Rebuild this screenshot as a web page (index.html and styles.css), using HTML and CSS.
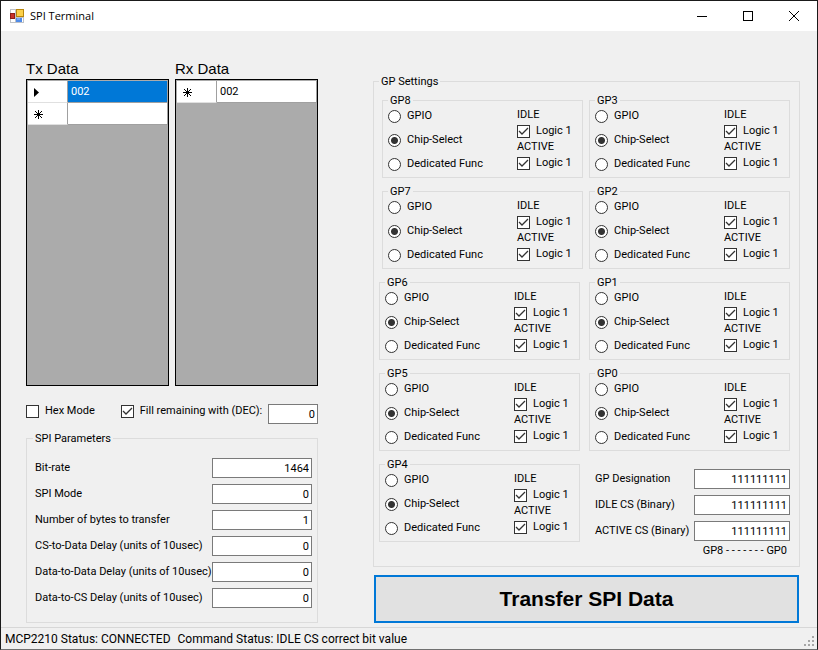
FILE: index.html
```html
<!DOCTYPE html>
<html lang="en">
<head>
<meta charset="utf-8">
<meta name="viewport" content="width=device-width, initial-scale=1">
<title>SPI Terminal</title>
<link rel="stylesheet" href="styles.css">
</head>
<body>
<div class="window">
  <header class="titlebar">
    <svg class="app-icon" width="14" height="14" viewBox="0 0 14 14" aria-hidden="true">
      <rect width="14" height="14" fill="#bfc2c7"/>
      <path d="M1 1h4v3H1zM1 10h4v3H1zM12 9h1v4h-1z" fill="#fff"/>
      <rect x="0.500" y="4.500" width="4" height="5" fill="#c8322a" stroke="#8e1f17"/>
      <rect x="6.500" y="0.500" width="7" height="7" fill="#fbd04a" stroke="#b8860b"/>
      <rect x="6" y="9" width="6" height="4" fill="#4f8be8"/>
      <path d="M7 10h3" stroke="#a9c8fa"/>
    </svg>
    <h1 class="title">SPI Terminal</h1>
    <div class="caption-buttons">
      <button class="caption-button" aria-label="Minimize"><svg width="12" height="12"><path d="M1 6.500h10" stroke="#000"/></svg></button>
      <button class="caption-button" aria-label="Maximize"><svg width="12" height="12"><rect x="1.500" y="1.500" width="9" height="9" fill="none" stroke="#000"/></svg></button>
      <button class="caption-button" aria-label="Close"><svg width="12" height="12"><path d="M1 1l10 10M11 1L1 11" stroke="#000"/></svg></button>
    </div>
  </header>

  <main class="content">
    <section class="left">
      <div class="grids">
        <section class="data-panel">
          <h2 class="panel-title">Tx Data</h2>
          <div class="data-view">
            <table class="data-table" aria-label="Tx Data">
              <tr><th scope="row" aria-label="Current row"><svg width="12" height="12"><path d="M2 2v9l5-4.500z"/></svg></th><td class="selected">002</td></tr>
              <tr><th scope="row" aria-label="New row"><svg width="12" height="12"><path d="M6.500 2v9M2 6.500h9M3 3l7 7M10 3l-7 7" stroke="#000"/></svg></th><td></td></tr>
            </table>
          </div>
        </section>
        <section class="data-panel">
          <h2 class="panel-title">Rx Data</h2>
          <div class="data-view">
            <table class="data-table" aria-label="Rx Data">
              <tr><th scope="row" aria-label="New row"><svg width="12" height="12"><path d="M6.500 2v9M2 6.500h9M3 3l7 7M10 3l-7 7" stroke="#000"/></svg></th><td>002</td></tr>
            </table>
          </div>
        </section>
      </div>

      <div class="options">
        <label class="choice"><input type="checkbox">Hex Mode</label>
        <label class="choice"><input type="checkbox" checked>Fill remaining with (DEC):</label>
        <input class="field fill-value" type="text" value="0" aria-label="Fill value">
      </div>

      <fieldset class="group spi">
        <legend>SPI Parameters</legend>
        <div class="form-rows">
          <label for="bitrate">Bit-rate</label><input class="field" id="bitrate" type="text" value="1464">
          <label for="mode">SPI Mode</label><input class="field" id="mode" type="text" value="0">
          <label for="bytes">Number of bytes to transfer</label><input class="field" id="bytes" type="text" value="1">
          <label for="csdata">CS-to-Data Delay (units of 10usec)</label><input class="field" id="csdata" type="text" value="0">
          <label for="datadata">Data-to-Data Delay (units of 10usec)</label><input class="field" id="datadata" type="text" value="0">
          <label for="datacs">Data-to-CS Delay (units of 10usec)</label><input class="field" id="datacs" type="text" value="0">
        </div>
      </fieldset>
    </section>

    <section class="right">
      <fieldset class="group settings">
        <legend>GP Settings</legend>
        <div class="pin-columns">
          <div class="pin-column">
            <div class="pin-stack upper" data-pins="8 7"></div>
            <div class="pin-stack lower" data-pins="6 5 4"></div>
          </div>
          <div class="pin-column">
            <div class="pin-stack" data-pins="3 2 1 0"></div>
            <div class="form-rows summary">
              <label for="designation">GP Designation</label><input class="field" id="designation" type="text" value="111111111">
              <label for="idlecs">IDLE CS (Binary)</label><input class="field" id="idlecs" type="text" value="111111111">
              <label for="activecs">ACTIVE CS (Binary)</label><input class="field" id="activecs" type="text" value="111111111">
            </div>
            <p class="bit-order">GP8 - - - - - - - GP0</p>
          </div>
        </div>
      </fieldset>
      <button class="transfer">Transfer SPI Data</button>
    </section>
  </main>

  <footer class="statusbar">
    <span>MCP2210 Status: CONNECTED</span>
    <span>Command Status: IDLE CS correct bit value</span>
    <svg class="grip" width="10" height="10" aria-hidden="true"><path d="M8 0h2v2h-2zM4 4h2v2h-2zM8 4h2v2h-2zM0 8h2v2h-2zM4 8h2v2h-2zM8 8h2v2h-2z" fill="#a6a6a6"/></svg>
  </footer>
</div>
<script src="pins.js"></script>
</body>
</html>
```
FILE: styles.css
```css
* { box-sizing: border-box; }

body {
  margin: 0;
  font: 11px/14px Roboto, "Liberation Sans", Arial, sans-serif;
  color: #000;
}

button, input { font: inherit; color: inherit; margin: 0; }

.window {
  min-height: 100vh;
  display: flex;
  flex-direction: column;
  background: #f0f0f0;
  border: 1px solid #1a1a1a;
  border-bottom-color: #707070;
}

.titlebar {
  display: flex;
  align-items: center;
  height: 30px;
  padding-left: 9px;
  background: #fff;
}

.title {
  flex: 1;
  margin: 0 0 0 6px;
  font: 11px/16px "Open Sans", "Noto Sans", sans-serif;
}

.caption-buttons { display: flex; align-self: stretch; }

.caption-button {
  display: flex;
  align-items: center;
  justify-content: center;
  width: 46px;
  padding: 0;
  border: 0;
  background: none;
}

.content {
  flex: 1;
  display: grid;
  grid-template-columns: minmax(0, 292fr) minmax(0, 427fr);
  column-gap: 55px;
  padding: 0 17px 4px 25px;
}

.left {
  display: flex;
  flex-direction: column;
  padding-top: 28px;
}

.grids { flex: 1; display: flex; gap: 6px; }

.data-panel { flex: 1; display: flex; flex-direction: column; }

.panel-title {
  margin: 0;
  font: 15px/20px "Liberation Sans", Arial, sans-serif;
}

.data-view {
  flex: 1;
  background: #ababab;
  border: 1px solid #000;
  padding: 1px 0 0 1px;
}

.data-table { width: 100%; border-collapse: separate; border-spacing: 0; }

.data-table th {
  width: 40px;
  height: 22px;
  padding: 0 0 0 4px;
  background: #fff;
  border-right: 1px solid #a0a0a0;
  border-bottom: 1px solid #e0e0e0;
  text-align: left;
}

.data-table th svg { display: block; }

.data-table td {
  padding: 0 3px;
  background: #fff;
  border-right: 1px solid #a0a0a0;
  border-bottom: 1px solid #a0a0a0;
}

.data-table .selected { background: #0078d7; color: #fff; }

.options {
  display: flex;
  align-items: flex-start;
  margin: 18px 0 8px;
}

.options .choice:first-child { margin-right: 26px; }

.choice { display: flex; align-items: center; gap: 6px; white-space: nowrap; }

.choice input {
  appearance: none;
  flex: none;
  width: 13px;
  height: 13px;
  background: #fff;
  border: 1px solid #333;
}

.choice input[type="checkbox"]:checked {
  background: #fff url("data:image/svg+xml,%3Csvg xmlns='http://www.w3.org/2000/svg' width='11' height='11'%3E%3Cpath d='M1 5l3 3 6-6' fill='none' stroke='%23333' stroke-width='1.3'/%3E%3C/svg%3E") center no-repeat;
}

.choice input[type="radio"] { border-radius: 50%; }

.choice input[type="radio"]:checked {
  background: radial-gradient(circle, #333 3px, #fff 4px);
}

.field {
  width: 100%;
  height: 20px;
  padding: 0 2px;
  background: #fff;
  border: 1px solid #7a7a7a;
  text-align: right;
}

.fill-value { width: 50px; margin-left: auto; }

.group {
  min-width: 0;
  margin: 0;
  padding: 0;
  border: 1px solid #dcdcdc;
}

.group legend {
  padding: 0 2px;
  line-height: 13px;
}

.spi { padding: 13px 5px 14px 8px; }

.spi legend { margin-left: -2px; }

.form-rows {
  display: grid;
  grid-template-columns: 1fr 100px;
  row-gap: 6px;
  align-items: center;
  white-space: nowrap;
}

.right { padding-top: 44px; display: flex; flex-direction: column; }

.settings { flex: 1; padding: 6px 9px 8px 5px; }

.pin-columns {
  display: grid;
  grid-template-columns: 204fr 201fr;
  column-gap: 6px;
}

.pin-stack { display: grid; gap: 7px; }

.upper { margin: 0 0 7px 3px; }

.lower { margin-right: 3px; }

.pin {
  display: flex;
  justify-content: space-between;
  padding: 0 11px 6px 5px;
}

.pin .modes {
  display: flex;
  flex-direction: column;
  justify-content: space-between;
  padding-top: 2px;
}

.pin .levels {
  display: grid;
  grid-template-columns: 54px;
  grid-auto-rows: 16px;
  align-items: center;
}

.summary {
  grid-template-columns: 1fr 96px;
  padding: 18px 0 0 6px;
}

.bit-order { margin: 3px 3px 0 0; text-align: right; }

.transfer {
  height: 48px;
  margin: 8px 1px 0;
  background: #e1e1e1;
  border: 2px solid #0078d7;
  font: bold 21px/24px "Liberation Sans", Arial, sans-serif;
}

.statusbar {
  display: flex;
  align-items: center;
  gap: 7px;
  height: 22px;
  padding: 0 3px 0 4px;
  border-top: 1px solid #d7d7d7;
  font-size: 12px;
}

.grip { margin: 5px 0 0 auto; }
```
FILE: pins.js
```js
document.querySelectorAll(".pin-stack").forEach((stack) => {
  stack.innerHTML = stack.dataset.pins.split(" ").map((n) => `
    <fieldset class="group pin">
      <legend>GP${n}</legend>
      <div class="modes">
        <label class="choice"><input type="radio" name="gp${n}">GPIO</label>
        <label class="choice"><input type="radio" name="gp${n}" checked>Chip-Select</label>
        <label class="choice"><input type="radio" name="gp${n}">Dedicated Func</label>
      </div>
      <div class="levels">
        <span>IDLE</span>
        <label class="choice"><input type="checkbox" checked>Logic 1</label>
        <span>ACTIVE</span>
        <label class="choice"><input type="checkbox" checked>Logic 1</label>
      </div>
    </fieldset>`).join("");
});
```
